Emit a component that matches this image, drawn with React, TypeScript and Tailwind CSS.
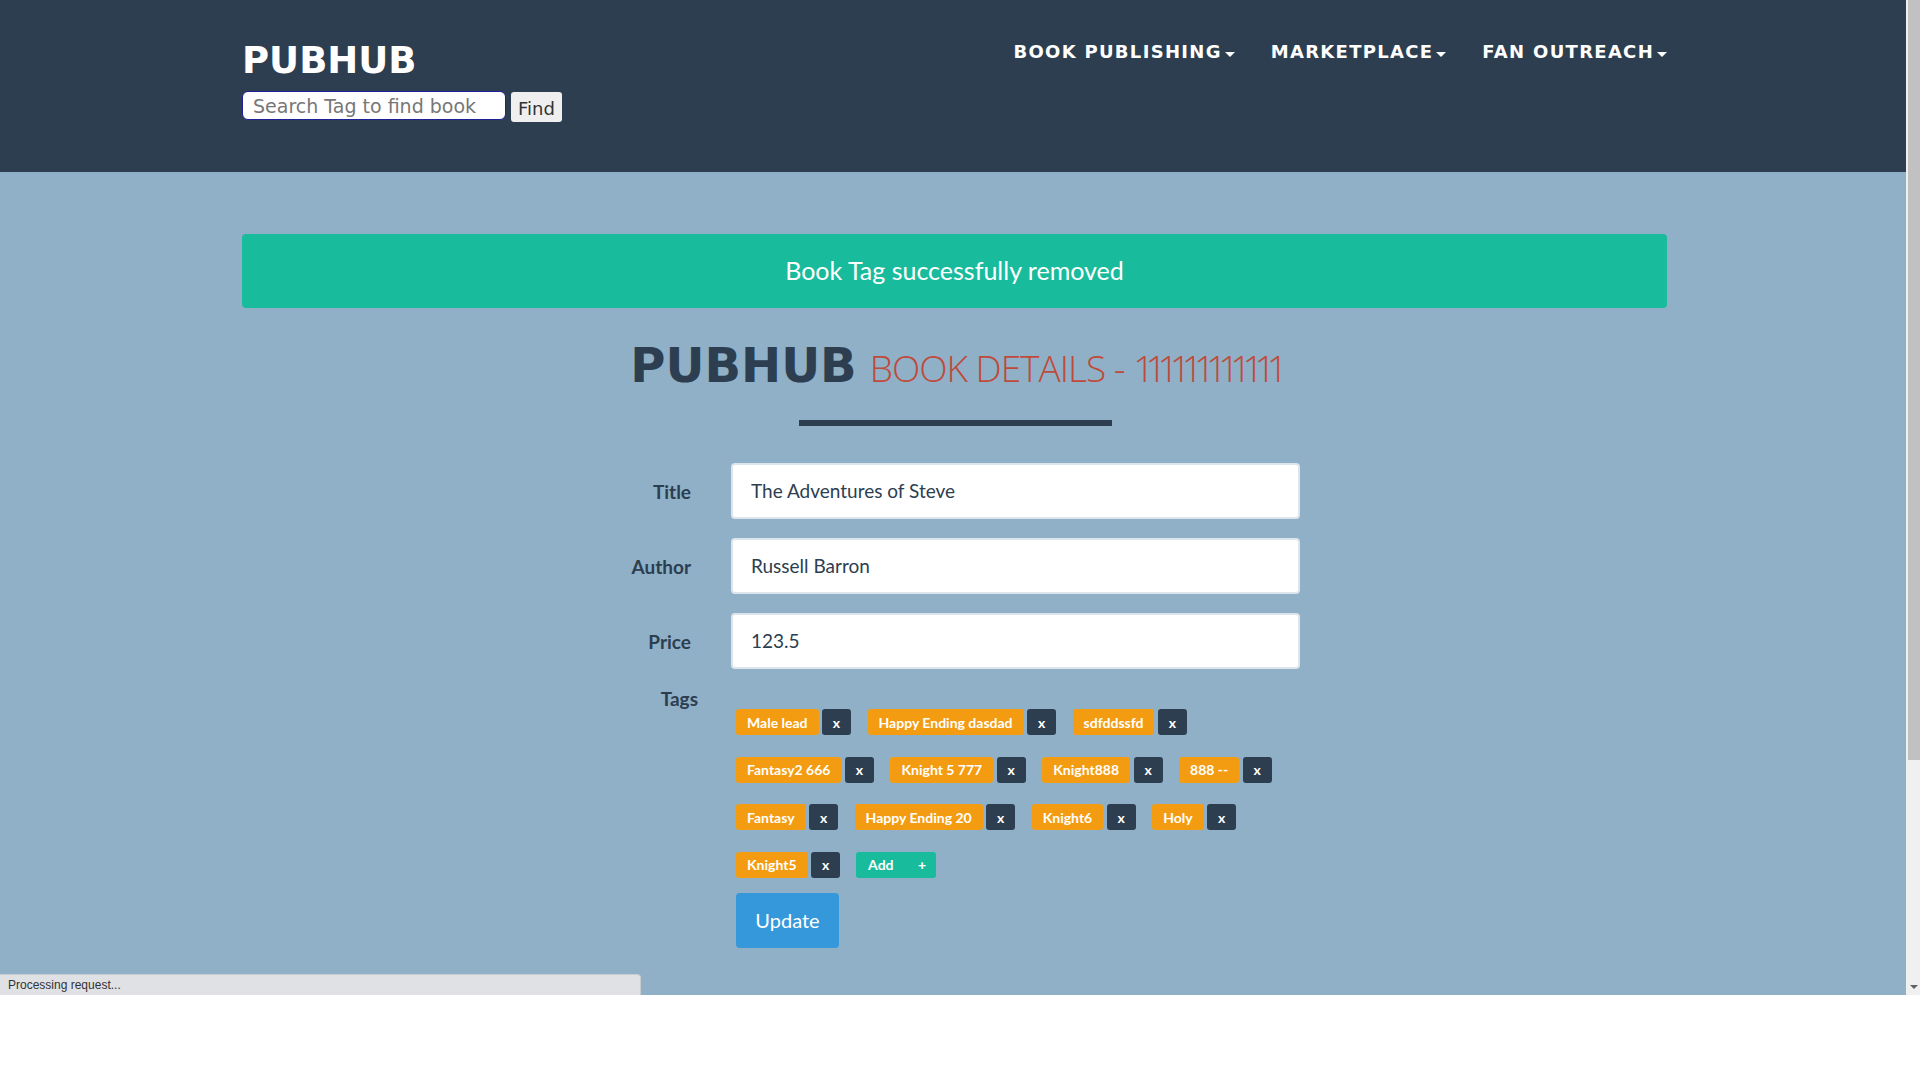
import React from "react";

const heading = { fontFamily: '"DejaVu Sans", sans-serif' };
const lato = { fontFamily: 'Lato, "Liberation Sans", sans-serif' };

function Caret() {
  return (
    <span className="ml-[3px] inline-block w-0 h-0 border-l-[5px] border-r-[5px] border-t-[5px] border-l-transparent border-r-transparent border-t-white translate-y-[-4px]" />
  );
}

function NavItem({ label }: { label: string }) {
  return (
    <div className="flex items-end text-white font-bold text-[18px] leading-[18px] tracking-[1.3px]" style={heading}>
      <span>{label}</span>
      <Caret />
    </div>
  );
}

function Tag({ label }: { label: string }) {
  return (
    <div className="flex gap-[3.5px]">
      <span className="h-[26px] px-[11px] flex items-center rounded-[3px] bg-[#f39c12] text-white font-bold text-[14px]">
        {label}
      </span>
      <span className="h-[26px] w-[29px] flex items-center justify-center rounded-[3px] bg-[#2c3e50] text-white font-bold text-[14px]">
        x
      </span>
    </div>
  );
}

function FieldRow({ label, value }: { label: string; value: string }) {
  return (
    <div className="flex items-center">
      <label className="w-[449px] text-right font-bold text-[19px] text-[#2c3e50] leading-none">{label}</label>
      <div className="ml-[40px] w-[569px] h-[56px] bg-white border-2 border-[#dce4ec] rounded-[4px] flex items-center px-[18px]">
        <input
          readOnly
          defaultValue={value}
          className="w-full bg-transparent outline-none text-[19px] text-[#2c3e50]"
          style={lato}
        />
      </div>
    </div>
  );
}

export default function App() {
  const rows: string[][] = [
    ["Male lead", "Happy Ending dasdad", "sdfddssfd"],
    ["Fantasy2 666", "Knight 5 777", "Knight888", "888 --"],
    ["Fantasy", "Happy Ending 20", "Knight6", "Holy"],
  ];
  return (
    <div className="relative w-[1920px] h-[1080px] bg-white overflow-hidden" style={lato}>
      <div className="flex h-[995px]">
        <div className="w-[1906px] h-full bg-[#8fb0c7] overflow-hidden">
          <header className="h-[172px] bg-[#2c3e50]">
            <div className="ml-[242px] w-[1425px] pt-[43px] flex justify-between">
              <div className="flex flex-col">
                <div className="text-white font-bold text-[37px] leading-[36px]" style={heading}>
                  PUBHUB
                </div>
                <div className="mt-[12px] flex items-start gap-[5px]">
                  <input
                    placeholder="Search Tag to find book"
                    className="w-[264px] h-[29px] bg-white rounded-[6px] border-[1.5px] border-[#1f1f96] px-[10px] text-[19px] text-[#333] placeholder:text-[#777] outline-none"
                    style={heading}
                  />
                  <button
                    className="mt-[1px] w-[51px] h-[30px] bg-[#efefef] rounded-[3px] text-[18px] text-[#333] pt-[4px] leading-none"
                    style={heading}
                  >
                    Find
                  </button>
                </div>
              </div>
              <nav className="flex gap-[36px] items-start">
                <NavItem label="BOOK PUBLISHING" />
                <NavItem label="MARKETPLACE" />
                <NavItem label="FAN OUTREACH" />
              </nav>
            </div>
          </header>

          <main className="ml-[242px] w-[1425px]">
            <div className="mt-[62px] h-[74px] bg-[#18bc9c] rounded-[4px] flex items-center justify-center text-white text-[25px]">
              Book Tag successfully removed
            </div>

            <div className="mt-[33px] flex items-baseline justify-center">
              <span className="font-bold text-[48px] leading-[48px] text-[#2c3e50]" style={heading}>
                PUBHUB
              </span>
              <span
                className="ml-[13px] text-[37px] leading-[37px] font-light text-[#bf4a3a] whitespace-pre"
                style={{ fontFamily: '"Open Sans", sans-serif' }}
              >
                <span className="tracking-[-1px]">BOOK DETAILS - </span>
                <span className="tracking-[-9px]">111111111111</span>
              </span>
            </div>

            <div className="mt-[31px] mx-auto w-[313px] h-[6px] bg-[#2c3e50] translate-x-[1px]" />

            <div className="mt-[37px] flex flex-col gap-[19px]">
              <FieldRow label="Title" value="The Adventures of Steve" />
              <FieldRow label="Author" value="Russell Barron" />
              <FieldRow label="Price" value="123.5" />
              <div className="flex items-start">
                <label className="w-[456px] text-right font-bold text-[19px] leading-[22px] text-[#2c3e50]">Tags</label>
                <div className="ml-[38px] pt-[21px] flex flex-col">
                  <div className="flex flex-col gap-[21.5px]">
                    {rows.map((r, i) => (
                      <div key={i} className="flex gap-[16.5px]">
                        {r.map((t) => (
                          <Tag key={t} label={t} />
                        ))}
                      </div>
                    ))}
                    <div className="flex gap-[16px]">
                      <Tag label="Knight5" />
                      <span className="h-[26px] w-[80px] pl-[12px] pr-[10px] flex items-center justify-between rounded-[3px] bg-[#18bc9c] text-white font-bold text-[14px]">
                        <span>Add</span>
                        <span>+</span>
                      </span>
                    </div>
                  </div>
                  <button className="mt-[15px] w-[103px] h-[55px] bg-[#3498db] rounded-[4px] text-white text-[20px]">
                    Update
                  </button>
                </div>
              </div>
            </div>
          </main>
        </div>
        <div className="w-[14px] h-full bg-[#f0f0f0] pl-[2px] flex flex-col">
          <div className="h-[760px] bg-[#c1c1c1]" />
          <div className="flex-1 flex items-end justify-center pb-[6px]">
            <span className="w-0 h-0 border-l-[4px] border-r-[4px] border-t-[4px] border-l-transparent border-r-transparent border-t-[#606060]" />
          </div>
        </div>
      </div>

      <div className="absolute left-0 top-[974px] w-[641px] h-[21px] bg-[#dfe1e5] border-t border-r border-[#c8ccd1] rounded-tr-[4px] flex items-center pl-[8px]">
        <span className="text-[12px] text-[#333]" style={{ fontFamily: '"Liberation Sans", sans-serif' }}>
          Processing request...
        </span>
      </div>
    </div>
  );
}
